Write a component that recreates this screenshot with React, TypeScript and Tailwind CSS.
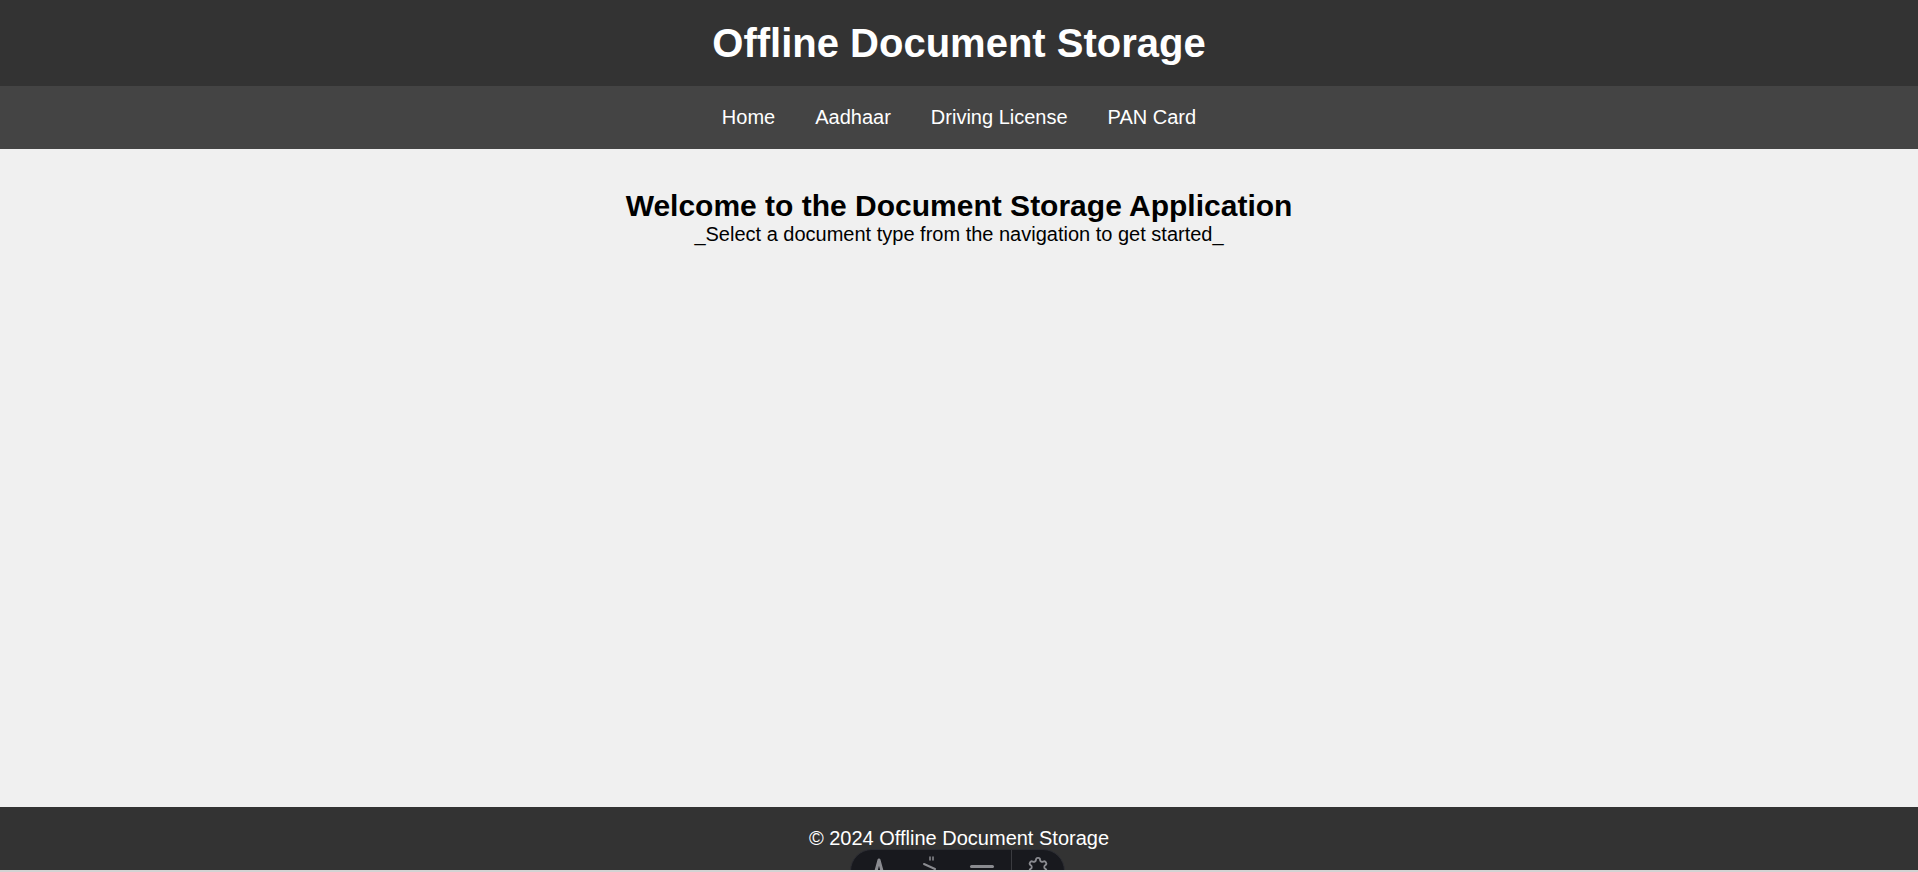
import React from "react";

const links = ["Home", "Aadhaar", "Driving License", "PAN Card"];

const DevToolbar = () => (
    <div className="absolute left-[850px] top-[849px] w-[215px] h-[44px] rounded-[22px] bg-[#18191e] border border-[#2c2d33] flex items-start overflow-hidden">
        <div className="w-[56px] flex justify-center pt-[7px]">
            <svg width="22" height="22" viewBox="0 0 22 22" fill="none">
                <path d="M8 14 L11 3 L14 14" stroke="#8a8b90" strokeWidth="3" strokeLinejoin="round" />
            </svg>
        </div>
        <div className="w-[46px] flex justify-center pt-[4px]">
            <svg width="22" height="22" viewBox="0 0 22 22" fill="none">
                <path d="M5 10 L16 15" stroke="#8a8b90" strokeWidth="2" strokeLinecap="round" />
                <path d="M11 3 L11 6 M14 3 L14 6" stroke="#8a8b90" strokeWidth="1.5" strokeLinecap="round" />
            </svg>
        </div>
        <div className="w-[58px] flex justify-center pt-[15px]">
            <div className="w-[24px] h-[3px] rounded-sm bg-[#8a8b90]" />
        </div>
        <div className="w-px h-full bg-[#3a3b40]" />
        <div className="flex-1 flex justify-center pt-[6px]">
            <svg width="22" height="22" viewBox="0 0 24 24" fill="none" stroke="#8a8b90" strokeWidth="2">
                <path d="M12.22 2h-.44a2 2 0 0 0-2 2v.18a2 2 0 0 1-1 1.730l-.43.25a2 2 0 0 1-2 0l-.15-.08a2 2 0 0 0-2.73.73l-.22.38a2 2 0 0 0 .73 2.730l.15.1a2 2 0 0 1 1 1.72v.51a2 2 0 0 1-1 1.740l-.15.09a2 2 0 0 0-.73 2.730l.22.38a2 2 0 0 0 2.73.73l.15-.08a2 2 0 0 1 2 0l.43.25a2 2 0 0 1 1 1.730V20a2 2 0 0 0 2 2h.44a2 2 0 0 0 2-2v-.18a2 2 0 0 1 1-1.730l.43-.25a2 2 0 0 1 2 0l.15.08a2 2 0 0 0 2.73-.73l.22-.39a2 2 0 0 0-.73-2.730l-.15-.08a2 2 0 0 1-1-1.740v-.5a2 2 0 0 1 1-1.740l.15-.09a2 2 0 0 0 .73-2.730l-.22-.38a2 2 0 0 0-2.73-.73l-.15.08a2 2 0 0 1-2 0l-.43-.25a2 2 0 0 1-1-1.730V4a2 2 0 0 0-2-2z" />
            </svg>
        </div>
    </div>
);

const App = () => {
    return (
        <div className="relative h-[872px] flex flex-col bg-[#f0f0f0] font-['Liberation_Sans',Arial,sans-serif] overflow-hidden">
            <header className="bg-[#333333] text-white text-center py-5">
                <h1 className="text-[40px] leading-[46px] font-bold">Offline Document Storage</h1>
            </header>
            <nav className="bg-[#444444] py-5">
                <ul className="flex justify-center gap-[40px] list-none text-[20px] leading-[23px]">
                    {links.map((l) => (
                        <li key={l}>
                            <a href="#" className="text-white">{l}</a>
                        </li>
                    ))}
                </ul>
            </nav>
            <main className="flex-1 text-center pt-[39px] text-black">
                <h2 className="text-[30px] leading-[35px] font-bold">Welcome to the Document Storage Application</h2>
                <p className="text-[20px] leading-[23px]">_Select a document type from the navigation to get started_</p>
            </main>
            <footer className="bg-[#333333] text-white text-center py-5">
                <p className="text-[20px] leading-[23px]">© 2024 Offline Document Storage</p>
            </footer>
            <div className="h-[2px] bg-[#d3d3d3] relative z-10" />
            <DevToolbar />
        </div>
    );
};

export default App;
